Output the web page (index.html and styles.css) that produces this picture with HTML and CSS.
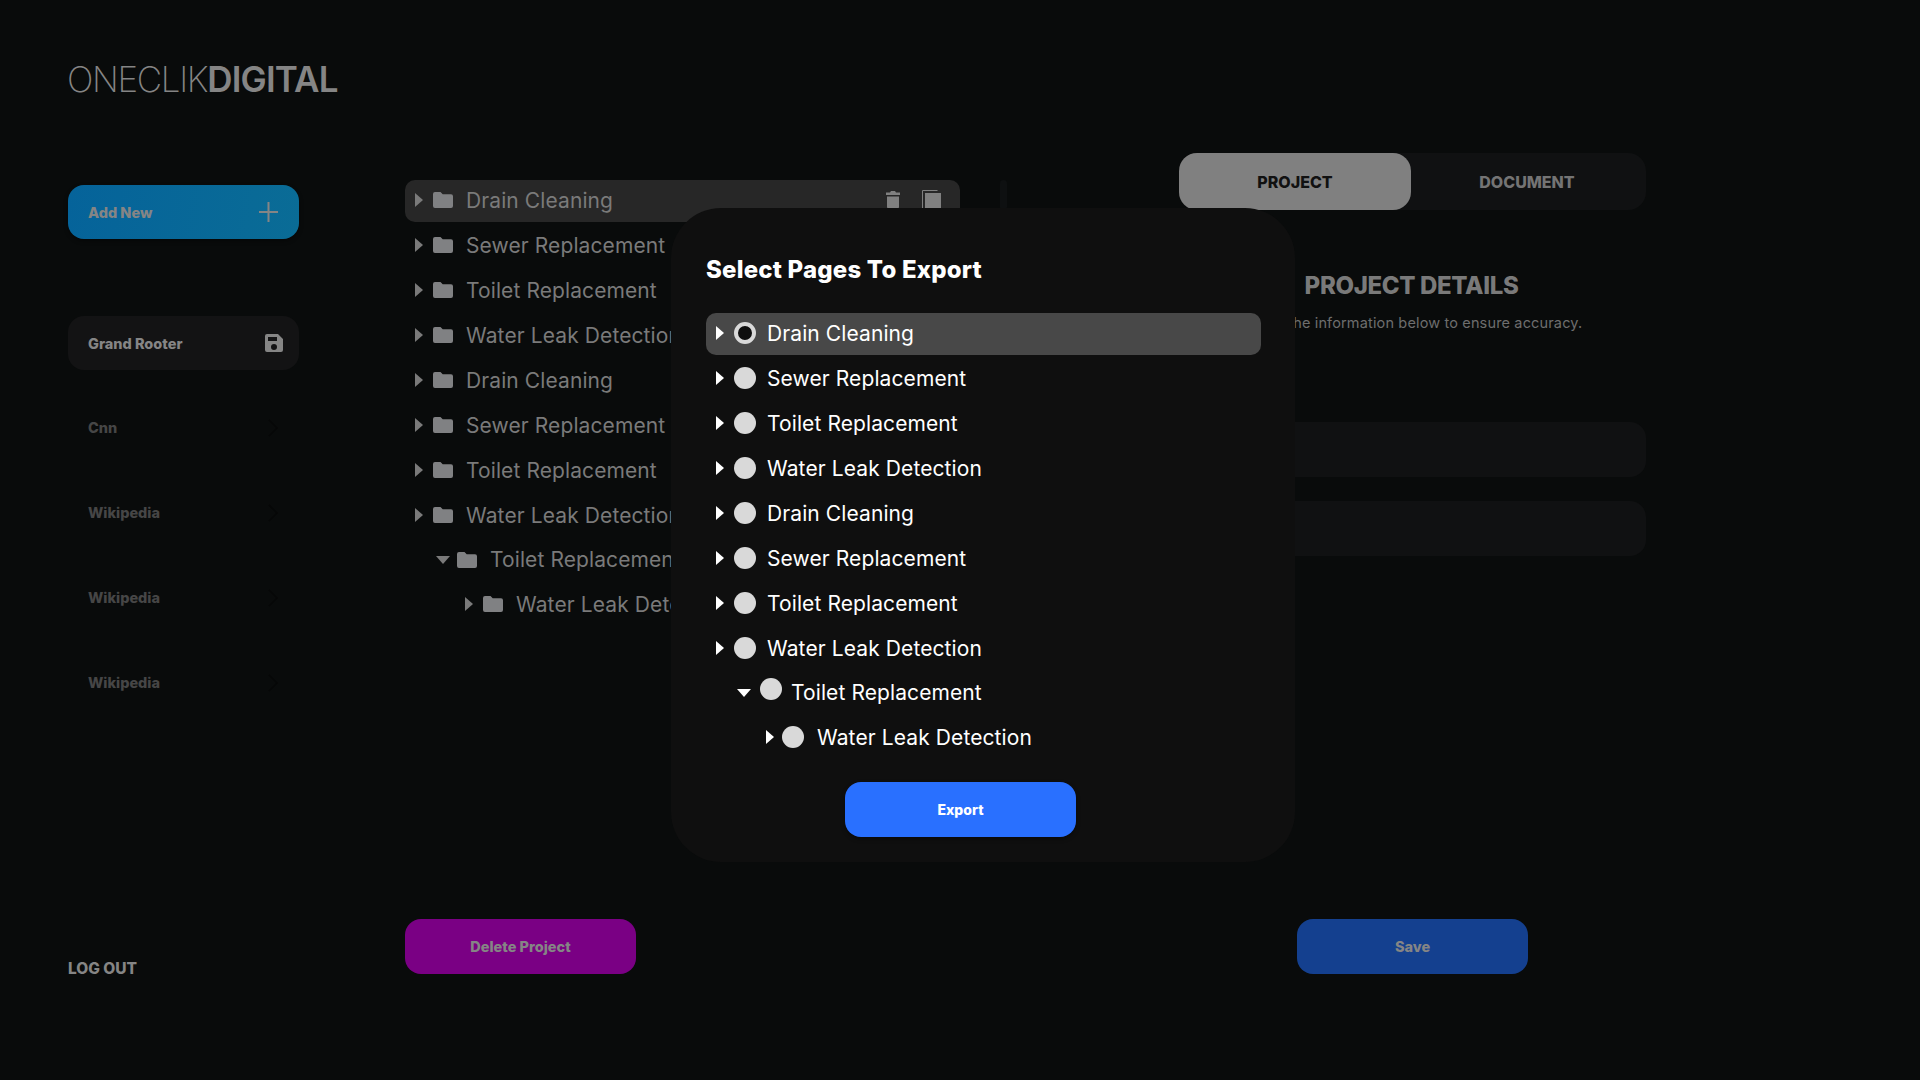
FILE: index.html
```html
<!DOCTYPE html>
<html lang="en">

<head>
    <meta charset="UTF-8">
    <meta name="viewport" content="width=device-width, initial-scale=1.0">

    <title>OneClik Digital</title>
    <link rel="stylesheet" href="styles.css">
</head>

<body>
    <svg class="icon-defs" aria-hidden="true">
        <symbol id="folder" viewBox="0 0 20 16">
            <path d="M2 0h5.500l2.200 2.200H18a2 2 0 0 1 2 2V14a2 2 0 0 1-2 2H2a2 2 0 0 1-2-2V2a2 2 0 0 1 2-2z" />
        </symbol>
        <symbol id="chevron" viewBox="0 0 12 20">
            <path d="M2 2l8 8-8 8" fill="none" stroke="currentColor" stroke-width="1.500" />
        </symbol>
    </svg>

    <div class="app">
        <aside class="sidebar">
            <div class="logo"><span class="logo-thin">ONECLIK</span><b>DIGITAL</b></div>

            <button class="side-btn add-btn">
                Add New
                <svg width="19" height="20" viewBox="0 0 19 20"><path d="M9.500 0v20M0 10h19" stroke="currentColor" stroke-width="2" /></svg>
            </button>

            <nav class="client-list">
                <div class="side-btn client-active">
                    Grand Rooter
                    <svg width="18" height="18" viewBox="0 0 18 18"><path fill-rule="evenodd" d="M2 0h11l5 5v11a2 2 0 0 1-2 2H2a2 2 0 0 1-2-2V2a2 2 0 0 1 2-2zm1 3v4h9V3zm6 7a3 3 0 1 0 0 6 3 3 0 0 0 0-6z" fill="currentColor" /></svg>
                </div>
                <div class="client">Cnn <svg class="chev"><use href="#chevron" /></svg></div>
                <div class="client">Wikipedia <svg class="chev"><use href="#chevron" /></svg></div>
                <div class="client">Wikipedia <svg class="chev"><use href="#chevron" /></svg></div>
                <div class="client">Wikipedia <svg class="chev"><use href="#chevron" /></svg></div>
            </nav>

            <a class="logout">LOG OUT</a>
        </aside>

        <main class="tree-col">
            <ul class="tree">
                <li class="tree-row selected">
                    <i class="caret"></i><svg class="folder"><use href="#folder" /></svg>
                    <span>Drain Cleaning</span>
                    <span class="row-actions">
                        <svg width="14" height="18" viewBox="0 0 14 18"><path d="M5 0h4l1 1.500h4V4H0V1.500h4zM1 5.500h12V16a2 2 0 0 1-2 2H3a2 2 0 0 1-2-2z" fill="currentColor" /></svg>
                        <svg width="19" height="20" viewBox="0 0 19 20"><path d="M.5 18V.5h15" fill="none" stroke="currentColor" stroke-width="1" /><rect x="3" y="3" width="16" height="17" fill="currentColor" /></svg>
                    </span>
                </li>
                <li class="tree-row"><i class="caret"></i><svg class="folder"><use href="#folder" /></svg><span>Sewer Replacement</span></li>
                <li class="tree-row"><i class="caret"></i><svg class="folder"><use href="#folder" /></svg><span>Toilet Replacement</span></li>
                <li class="tree-row"><i class="caret"></i><svg class="folder"><use href="#folder" /></svg><span>Water Leak Detection</span></li>
                <li class="tree-row"><i class="caret"></i><svg class="folder"><use href="#folder" /></svg><span>Drain Cleaning</span></li>
                <li class="tree-row"><i class="caret"></i><svg class="folder"><use href="#folder" /></svg><span>Sewer Replacement</span></li>
                <li class="tree-row"><i class="caret"></i><svg class="folder"><use href="#folder" /></svg><span>Toilet Replacement</span></li>
                <li class="tree-row"><i class="caret"></i><svg class="folder"><use href="#folder" /></svg><span>Water Leak Detection</span></li>
                <li class="tree-row level-1"><i class="caret open"></i><svg class="folder"><use href="#folder" /></svg><span>Toilet Replacement</span></li>
                <li class="tree-row level-2"><i class="caret"></i><svg class="folder"><use href="#folder" /></svg><span>Water Leak Detection</span></li>
            </ul>
            <button class="big-btn delete-btn">Delete Project</button>
        </main>

        <div class="divider"></div>

        <section class="details">
            <div class="tabs">
                <div class="tab active">PROJECT</div>
                <div class="tab">DOCUMENT</div>
            </div>
            <h2>PROJECT DETAILS</h2>
            <p class="hint">Verify the information below to ensure accuracy.</p>
            <div class="field"></div>
            <div class="field"></div>
            <button class="big-btn save-btn">Save</button>
        </section>
    </div>

    <!-- Export modal -->
    <div class="modal">
        <h3>Select Pages To Export</h3>
        <ul class="pages">
            <li class="page selected"><i class="caret"></i><i class="radio checked"></i><span>Drain Cleaning</span></li>
            <li class="page"><i class="caret"></i><i class="radio"></i><span>Sewer Replacement</span></li>
            <li class="page"><i class="caret"></i><i class="radio"></i><span>Toilet Replacement</span></li>
            <li class="page"><i class="caret"></i><i class="radio"></i><span>Water Leak Detection</span></li>
            <li class="page"><i class="caret"></i><i class="radio"></i><span>Drain Cleaning</span></li>
            <li class="page"><i class="caret"></i><i class="radio"></i><span>Sewer Replacement</span></li>
            <li class="page"><i class="caret"></i><i class="radio"></i><span>Toilet Replacement</span></li>
            <li class="page"><i class="caret"></i><i class="radio"></i><span>Water Leak Detection</span></li>
            <li class="page level-1"><i class="caret open"></i><i class="radio"></i><span>Toilet Replacement</span></li>
            <li class="page level-2"><i class="caret"></i><i class="radio"></i><span>Water Leak Detection</span></li>
        </ul>
        <button class="big-btn export-btn">Export</button>
    </div>
</body>

</html>
```

FILE: styles.css
```css
* {
    box-sizing: border-box;
}

html,
body {
    margin: 0;
    height: 100%;
}

body {
    background-color: #090b0b;
    color: #7a7a7a;
    font-family: "Inter", "Liberation Sans", sans-serif;
    overflow: hidden;
}

ul {
    list-style: none;
    margin: 0;
    padding: 0;
}

button {
    border: none;
    font-family: inherit;
    color: inherit;
}

.icon-defs {
    position: absolute;
    width: 0;
    height: 0;
}

.app {
    display: flex;
    height: 1080px;
}

/* left column */
.sidebar {
    width: 405px;
    padding: 59px 0 0 68px;
    display: flex;
    flex-direction: column;
}

.logo {
    margin-left: -1px;
    font-size: 35px;
    line-height: 40px;
    letter-spacing: -0.8px;
    color: #858585;
}

.logo b {
    font-weight: 600;
}

.logo-thin {
    font-weight: 200;
    letter-spacing: -1.35px;
}

.side-btn {
    width: 231px;
    height: 54px;
    padding: 0 16px 0 20px;
    border-radius: 16px;
    display: flex;
    align-items: center;
    justify-content: space-between;
    font-size: 14.5px;
    font-weight: 800;
    color: #858585;
}

.add-btn {
    margin-top: 86px;
    padding-right: 21px;
    background: linear-gradient(100deg, #05639a 0%, #0a6c96 100%);
    box-shadow: 0 2px 4px rgba(0, 0, 0, 0.4);
}

.client-list {
    margin-top: 77px;
}

.client-active {
    margin-bottom: 15px;
    background-color: #131314;
}

.client {
    width: 231px;
    height: 85px;
    padding: 0 20px;
    display: flex;
    align-items: center;
    justify-content: space-between;
    font-size: 14.5px;
    font-weight: 800;
    color: #464646;
}

.chev {
    width: 12px;
    height: 20px;
    color: #060707;
}

.logout {
    margin-top: 234px;
    font-size: 15.5px;
    font-weight: 800;
    color: #858585;
}

/* folder tree */
.tree-col {
    width: 555px;
    padding-top: 180px;
    display: flex;
    flex-direction: column;
}

.tree {
    height: 739px;
}

.tree-row {
    height: 42px;
    margin-bottom: 3px;
    padding: 0 0 2px 10px;
    display: flex;
    align-items: center;
    border-radius: 10px;
    font-size: 21px;
    letter-spacing: 0.1px;
    white-space: nowrap;
}

.tree-row.selected {
    background-color: #272727;
}

.tree-row.level-1 {
    height: 41px;
    padding-left: 31px;
}

.tree-row.level-1 .folder {
    margin-left: 7px;
}

.tree-row.level-2 {
    padding-left: 60px;
}

.caret {
    width: 0;
    height: 0;
    flex: none;
    border-left: 8px solid currentColor;
    border-top: 7px solid transparent;
    border-bottom: 7px solid transparent;
}

.caret.open {
    border-left: 7px solid transparent;
    border-right: 7px solid transparent;
    border-top: 8px solid currentColor;
    border-bottom: none;
}

.folder {
    width: 20px;
    height: 16px;
    margin: 0 13px 0 10px;
    flex: none;
    fill: #808183;
}

.row-actions {
    margin-left: auto;
    padding-right: 19px;
    display: flex;
    align-items: center;
    gap: 22px;
    color: #808080;
}

.big-btn {
    width: 231px;
    height: 55px;
    border-radius: 16px;
    font-size: 14.5px;
    font-weight: 800;
    color: #858585;
}

.delete-btn {
    background-color: #7a0084;
}

/* faint line between tree and details */
.divider {
    width: 7px;
    height: 30px;
    margin: 180px 0 0 40px;
    border-radius: 4px;
    background-color: #0e1011;
}

/* right column */
.details {
    margin-left: 172px;
    width: 467px;
    padding-top: 153px;
    display: flex;
    flex-direction: column;
    align-items: center;
}

.tabs {
    width: 100%;
    height: 57px;
    display: flex;
    border-radius: 18px;
    background-color: #101112;
}

.tab {
    width: 232px;
    display: flex;
    align-items: center;
    justify-content: center;
    border-radius: 18px;
    font-size: 16px;
    font-weight: 800;
    color: #747474;
}

.tab.active {
    background-color: #808080;
    color: #111111;
}

.details h2 {
    margin: 60px 0 0 -2px;
    font-size: 24px;
    line-height: 32px;
    font-weight: 800;
    letter-spacing: -0.35px;
}

.hint {
    margin: 11px 0 89px;
    font-size: 14.5px;
    line-height: 20px;
    letter-spacing: 0.15px;
    color: #6e6e6e;
}

.field {
    width: 100%;
    height: 55px;
    margin-bottom: 24px;
    border-radius: 16px;
    background-color: #101112;
}

.save-btn {
    margin-top: 339px;
    background-color: #14408f;
}

/* export modal */
.modal {
    position: fixed;
    left: 671px;
    top: 208px;
    width: 624px;
    height: 654px;
    padding: 45px 34px 0 35px;
    border-radius: 50px;
    background-color: #0f0f0f;
    color: #ffffff;
    display: flex;
    flex-direction: column;
}

.modal h3 {
    margin: 0;
    font-size: 24px;
    line-height: 34px;
    font-weight: 800;
    letter-spacing: 0.2px;
}

.pages {
    margin-top: 26px;
}

.page {
    height: 42px;
    margin-bottom: 3px;
    padding: 0 0 2px 10px;
    display: flex;
    align-items: center;
    border-radius: 10px;
    font-size: 21px;
    letter-spacing: 0.1px;
}

.page.selected {
    background-color: #484848;
}

.page.level-1 {
    height: 41px;
    padding-left: 31px;
}

.page.level-2 {
    padding-left: 60px;
}

.radio {
    width: 22px;
    height: 22px;
    margin: 0 11px 0 10px;
    flex: none;
    border-radius: 50%;
    background-color: #d9d9d9;
}

.radio.checked {
    background-color: #0f0f0f;
    border: 4px solid #d9d9d9;
}

.page.level-1 .radio {
    margin: 0 9px 8px 9px;
}

.page.level-2 .radio {
    margin: 0 13px 0 8px;
}

.export-btn {
    margin: 20px 0 0 139px;
    background-color: #2970ff;
    color: #ffffff;
    font-size: 14px;
    box-shadow: 0 2px 4px rgba(0, 0, 0, 0.4);
}
```
